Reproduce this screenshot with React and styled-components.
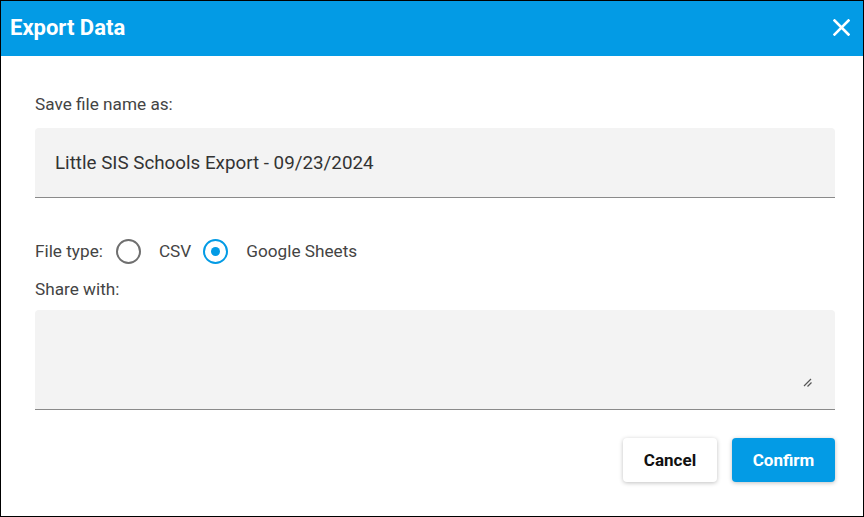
import React from "react";
import styled, { createGlobalStyle } from "styled-components";

const Global = createGlobalStyle`
  html, body { margin: 0; padding: 0; background: #fff; }
  body { font-family: Roboto, "Liberation Sans", sans-serif; }
  * { box-sizing: border-box; }
`;

const Dialog = styled.div`
  width: 864px;
  height: 517px;
  border: 1px solid #000;
  display: flex;
  flex-direction: column;
  background: #fff;
`;

const Header = styled.div`
  height: 55px;
  background: #039be5;
  display: flex;
  align-items: center;
  justify-content: space-between;
  padding: 0 13px 3px 9px;
`;

const Title = styled.h1`
  margin: 0;
  font-size: 22px;
  font-weight: 700;
  color: #fff;
`;

const CloseButton = styled.button`
  border: 0;
  background: transparent;
  padding: 0;
  width: 18px;
  height: 18px;
  display: flex;
  align-items: center;
  justify-content: center;
  cursor: pointer;
`;

const Body = styled.div`
  flex: 1;
  display: flex;
  flex-direction: column;
  padding: 36px 28px 0 34px;
`;

const Label = styled.div`
  font-size: 17.2px;
  line-height: 24px;
  color: #444;
  margin-top: ${(p) => p.$mt || 0}px;
`;

const Field = styled.div`
  margin-top: 12px;
  height: 70px;
  background: #f3f3f3;
  border-bottom: 1px solid #8a8a8a;
  border-radius: 4px 4px 0 0;
  display: flex;
  align-items: center;
  padding: 0 20px;
  font-size: 18.8px;
  color: #333;
`;

const TextArea = styled.div`
  margin-top: 9px;
  height: 100px;
  background: #f3f3f3;
  border-bottom: 1px solid #8a8a8a;
  border-radius: 4px 4px 0 0;
  position: relative;
`;

const Grip = styled.svg`
  position: absolute;
  right: 22px;
  bottom: 21px;
`;

const RadioRow = styled.div`
  margin-top: 40px;
  height: 26px;
  display: flex;
  align-items: center;
  font-size: 17.2px;
  color: #444;
`;

const Radio = styled.span`
  width: 25px;
  height: 25px;
  border-radius: 50%;
  border: 2px solid ${(p) => (p.$checked ? "#039be5" : "#6f6f6f")};
  display: inline-flex;
  align-items: center;
  justify-content: center;
  margin: 0 ${(p) => p.$mr}px 0 ${(p) => p.$ml}px;
  &::after {
    content: "";
    display: ${(p) => (p.$checked ? "block" : "none")};
    width: 9px;
    height: 9px;
    border-radius: 50%;
    background: #039be5;
  }
`;

const Actions = styled.div`
  margin-top: 28px;
  display: flex;
  justify-content: flex-end;
  gap: 15px;
`;

const Button = styled.button`
  height: 44px;
  width: ${(p) => p.$w}px;
  border: 0;
  border-radius: 4px;
  font-family: Roboto, "Liberation Sans", sans-serif;
  font-size: 17px;
  font-weight: 700;
  background: ${(p) => (p.$primary ? "#039be5" : "#fff")};
  color: ${(p) => (p.$primary ? "#fff" : "#111")};
  box-shadow: 0 1px 4px rgba(0, 0, 0, 0.25);
  cursor: pointer;
`;

export default function App() {
  return (
    <>
      <Global />
      <Dialog>
        <Header>
          <Title>Export Data</Title>
          <CloseButton aria-label="Close">
            <svg width="17" height="17" viewBox="0 0 17 17">
              <path d="M1.5 1.5 L15.5 15.5 M15.5 1.5 L1.5 15.5" stroke="#fff" strokeWidth="2.6" strokeLinecap="square" />
            </svg>
          </CloseButton>
        </Header>
        <Body>
          <Label>Save file name as:</Label>
          <Field>Little SIS Schools Export - 09/23/2024</Field>
          <RadioRow>
            File type:
            <Radio $ml={13} $mr={18} />
            CSV
            <Radio $checked $ml={12} $mr={18} />
            Google Sheets
          </RadioRow>
          <Label $mt={13}>Share with:</Label>
          <TextArea>
            <Grip width="10" height="10" viewBox="0 0 10 10">
              <path d="M1 8 L8 1 M4.5 8.5 L8.5 4.5" stroke="#555" strokeWidth="1.2" />
            </Grip>
          </TextArea>
          <Actions>
            <Button $w={94}>Cancel</Button>
            <Button $primary $w={103}>Confirm</Button>
          </Actions>
        </Body>
      </Dialog>
    </>
  );
}
